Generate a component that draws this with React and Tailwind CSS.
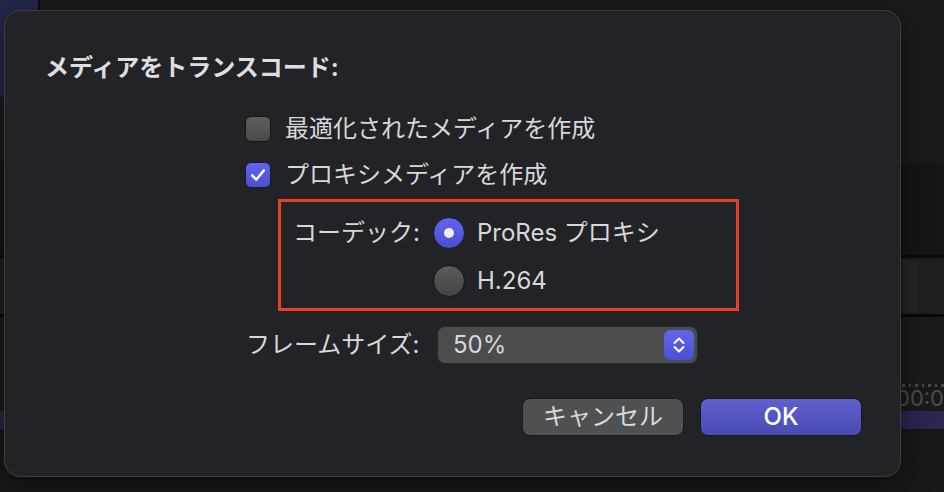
export default function App() {
  const font = "font-['Inter','Noto_Sans_CJK_JP',sans-serif]";
  return (
    <div className={`relative w-[944px] h-[492px] overflow-hidden bg-[#181818] ${font}`}>
      {/* background app */}
      <div className="flex flex-col h-full">
        <div className="flex h-[97px]">
          <div className="w-[38px] bg-[#23284a]" />
          <div className="w-[2px] bg-[#0d0d0f]" />
          <div className="flex-1 bg-[#1c1b1b]" />
        </div>
        <div className="h-[66px] bg-[#1c1b1b]" />
        <div className="h-[92px] bg-[#151515]" />
        <div className="h-[3px] bg-[#0a0a0a]" />
        <div className="h-[56px] bg-[#1f1f1f] flex py-[2px]">
          <div className="ml-[902px] w-[15px] bg-[#262626]" />
        </div>
        <div className="h-[3px] bg-[#0a0a0a]" />
        <div className="h-[64px] bg-[#1b1b1b]" />
        <div className="h-[30px] bg-[#1a1a1a] flex flex-col pl-[896px]">
          <div className="flex gap-[4px] mt-[3px] ml-[6px]">
            {[0, 1, 2, 3, 4, 5, 6].map((i) => (
              <div key={i} className="w-[3px] h-[3px] bg-[#4a4a4a]" />
            ))}
          </div>
          <div className="text-[22px] leading-[22px] text-[#4e4e4e] whitespace-nowrap">00:00</div>
        </div>
        <div className="h-[18px] bg-[#2c2650]" />
        <div className="flex-1 bg-[#181818]" />
      </div>

      {/* dialog */}
      <div className="absolute left-[4px] top-[10px] w-[897px] h-[467px] rounded-[16px] border border-[#3d3d40] bg-[#222326] shadow-[0_8px_30px_rgba(0,0,0,0.5)] pt-[45px] pl-[40px] pr-[38px] flex flex-col text-[#d8d8d8]">
        <div className="h-[24px] leading-[24px] text-[24px] font-bold text-[#dedede] whitespace-nowrap">
          メディアをトランスコード:
        </div>

        <div className="mt-[35px] ml-[200px] h-[28px] flex items-center gap-[14px]">
          <div className="w-[26px] h-[26px] rounded-[6px] border border-[#151515] bg-gradient-to-b from-[#5e5e60] to-[#49494b]" />
          <span className="text-[24px] leading-[28px] whitespace-nowrap">最適化されたメディアを作成</span>
        </div>

        <div className="mt-[18px] ml-[200px] h-[28px] flex items-center gap-[14px]">
          <div className="w-[26px] h-[26px] rounded-[6px] border border-[#1a1a2e] bg-gradient-to-b from-[#6064ec] to-[#4b4fd2] flex items-center justify-center">
            <svg width="20" height="20" viewBox="0 0 24 24" fill="none">
              <path d="M5 12.5 L10 17.5 L19 6.5" stroke="white" strokeWidth="3" strokeLinecap="round" strokeLinejoin="round" />
            </svg>
          </div>
          <span className="text-[24px] leading-[28px] whitespace-nowrap">プロキシメディアを作成</span>
        </div>

        <div className="mt-[10px] ml-[233px] w-[461px] h-[112px] border-[3px] border-[#e2412b] pt-[15px] pl-[12px] flex flex-col">
          <div className="h-[32px] flex items-center">
            <div className="w-[140px] text-[24px] leading-[28px] whitespace-nowrap">コーデック:</div>
            <div className="w-[32px] h-[32px] rounded-full border border-[#1a1a2e] bg-gradient-to-b from-[#6165ec] to-[#4a4ed0] flex items-center justify-center">
              <div className="w-[10px] h-[10px] rounded-full bg-[#eeeeff]" />
            </div>
            <span className="ml-[12px] text-[24px] leading-[28px] whitespace-nowrap">ProRes プロキシ</span>
          </div>
          <div className="mt-[16px] h-[32px] flex items-center">
            <div className="w-[140px]" />
            <div className="w-[32px] h-[32px] rounded-full border border-[#151515] bg-gradient-to-b from-[#5c5c5e] to-[#444446]" />
            <span className="ml-[12px] text-[24px] leading-[28px] whitespace-nowrap">H.264</span>
          </div>
        </div>

        <div className="mt-[15px] ml-[201px] h-[38px] flex items-center">
          <div className="w-[191px] text-[24px] leading-[28px] whitespace-nowrap">フレームサイズ:</div>
          <div className="w-[261px] h-[38px] rounded-[8px] border border-[#2a2a2c] bg-[#4b4c4e] flex items-center pl-[15px] pr-[3px] justify-between">
            <span className="text-[24px] leading-[28px]">50%</span>
            <div className="w-[30px] h-[30px] rounded-[6px] bg-gradient-to-b from-[#6266ea] to-[#4b4fd4] flex items-center justify-center">
              <svg width="18" height="20" viewBox="0 0 18 20" fill="none">
                <path d="M4.5 8 L9 3.5 L13.5 8" stroke="white" strokeWidth="2" strokeLinecap="round" strokeLinejoin="round" />
                <path d="M4.5 12 L9 16.5 L13.5 12" stroke="white" strokeWidth="2" strokeLinecap="round" strokeLinejoin="round" />
              </svg>
            </div>
          </div>
        </div>

        <div className="mt-[34px] flex justify-end gap-[16px]">
          <div className="w-[162px] h-[38px] rounded-[8px] border border-[#19191b] bg-[#4f5052] flex items-center justify-center text-[24px] leading-[28px] text-[#dadada]">
            キャンセル
          </div>
          <div className="w-[162px] h-[38px] rounded-[8px] border border-[#19191b] bg-gradient-to-b from-[#5d60d0] to-[#4a4cb2] flex items-center justify-center text-[24px] leading-[28px] font-medium text-white">
            OK
          </div>
        </div>
      </div>
    </div>
  );
}
